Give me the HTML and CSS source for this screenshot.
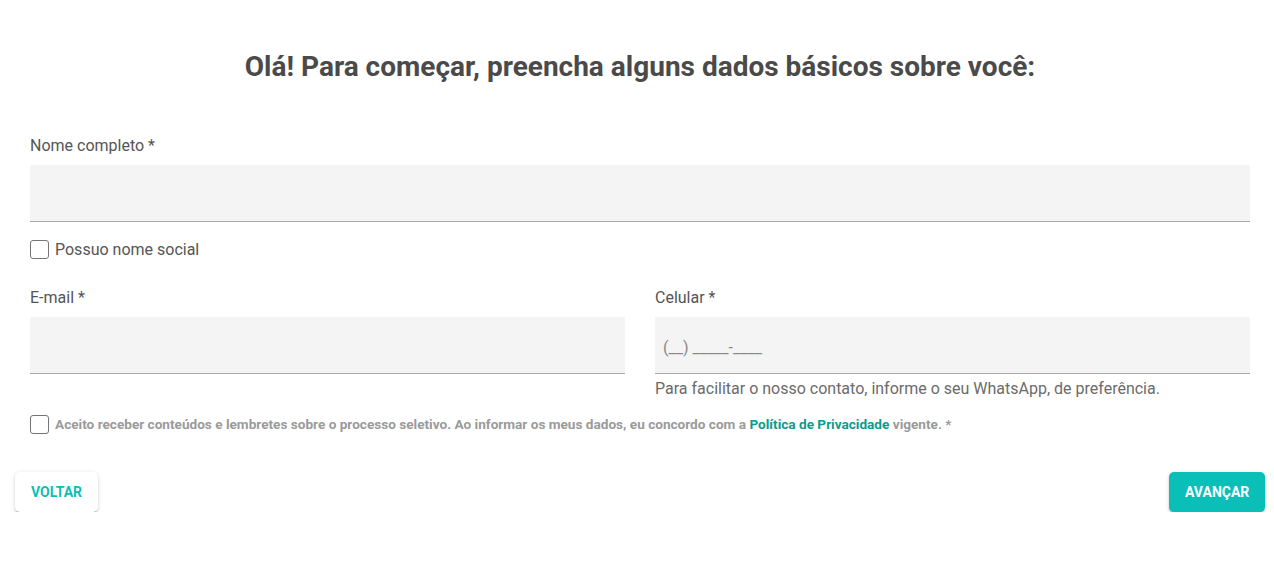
FILE: index.html
```html
<!DOCTYPE html>
<html lang="pt-BR">
<head>
<meta charset="utf-8">
<title>Dados básicos</title>
<link rel="stylesheet" href="styles.css">
</head>
<body>
<main class="page">
  <h1 class="title">Olá! Para começar, preencha alguns dados básicos sobre você:</h1>
  <form class="form">
    <div class="field">
      <label class="label">Nome completo *</label>
      <div class="input"></div>
    </div>
    <label class="check">
      <span class="box"></span>
      <span class="check-text">Possuo nome social</span>
    </label>
    <div class="row">
      <div class="field">
        <label class="label">E-mail *</label>
        <div class="input"></div>
      </div>
      <div class="field">
        <label class="label">Celular *</label>
        <div class="input"><span class="placeholder">(__) _____-____</span></div>
        <div class="helper">Para facilitar o nosso contato, informe o seu WhatsApp, de preferência.</div>
      </div>
    </div>
    <label class="check consent">
      <span class="box"></span>
      <span class="consent-text">Aceito receber conteúdos e lembretes sobre o processo seletivo. Ao informar os meus dados, eu concordo com a <a class="link">Política de Privacidade</a> vigente. *</span>
    </label>
  </form>
  <div class="actions">
    <button class="btn btn-back">VOLTAR</button>
    <button class="btn btn-next">AVANÇAR</button>
  </div>
</main>
</body>
</html>
```

FILE: styles.css
```css
* { box-sizing: border-box; }
html, body { margin: 0; padding: 0; background: #fff; }
body {
  font-family: Roboto, "Liberation Sans", Arial, sans-serif;
  color: #555;
}
.page {
  width: 1274px;
  padding-top: 47px;
}
.title {
  margin: 0 24px 0 30px;
  text-align: center;
  font-size: 28px;
  line-height: 40px;
  font-weight: 700;
  color: #4a4a4a;
}
.form {
  margin: 49px 24px 0 30px;
  display: flex;
  flex-direction: column;
}
.field { display: flex; flex-direction: column; }
.label {
  font-size: 16px;
  line-height: 20px;
  color: #555;
  margin-bottom: 9px;
}
.input {
  height: 57px;
  background: #f4f4f4;
  border-bottom: 1px solid #ababab;
  display: flex;
  align-items: center;
  padding: 0 8px;
}
.placeholder {
  font-size: 16px;
  color: #888;
  padding-top: 4px;
}
.check {
  display: flex;
  align-items: center;
  gap: 6px;
  margin-top: 17px;
  height: 20px;
}
.box {
  width: 19px;
  height: 19px;
  border: 1.5px solid #757575;
  border-radius: 3px;
  flex: none;
  background: #fff;
}
.check-text {
  font-size: 16px;
  color: #555;
}
.row {
  display: grid;
  grid-template-columns: 1fr 1fr;
  column-gap: 30px;
  margin-top: 29px;
}
.helper {
  margin-top: 5px;
  font-size: 16px;
  line-height: 20px;
  color: #6b6b6b;
}
.consent { margin-top: 15px; }
.consent-text {
  font-size: 13.6px;
  font-weight: 700;
  color: #9a9a9a;
}
.link {
  color: #0e9a8c;
  text-decoration: none;
}
.actions {
  display: flex;
  justify-content: space-between;
  margin: 38px 9px 0 15px;
}
.btn {
  height: 40px;
  border: none;
  border-radius: 5px;
  font-family: Roboto, "Liberation Sans", Arial, sans-serif;
  font-size: 14px;
  font-weight: 700;
  padding: 0 16px;
  box-shadow: 0 3px 1px -2px rgba(0,0,0,0.2), 0 2px 2px 0 rgba(0,0,0,0.14), 0 1px 5px 0 rgba(0,0,0,0.12);
  cursor: pointer;
}
.btn-back {
  background: #fff;
  color: #10bdb6;
  width: 83px;
}
.btn-next {
  background: #0abfb8;
  color: #fff;
  width: 96px;
}
```
